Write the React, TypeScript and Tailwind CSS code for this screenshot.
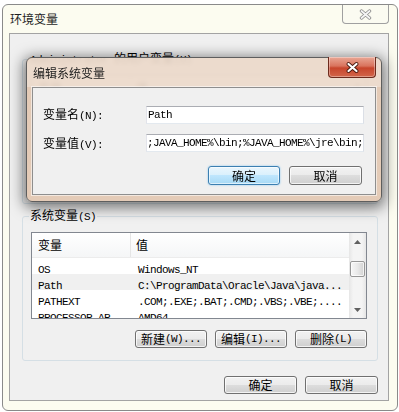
import React from "react";

// ASCII part of SimSun-like text: 6px per character
function M({ children }: { children: React.ReactNode }) {
  return (
    <span className="[font-family:'Liberation_Mono',monospace] text-[11px] tracking-[-0.6px]">
      {children}
    </span>
  );
}

const btnGray =
  "flex h-[18px] items-center justify-center rounded-[3px] border border-[#707070] bg-[linear-gradient(to_bottom,#f2f2f2_0%,#ebebeb_49%,#dddddd_50%,#cfcfcf_100%)] text-[12px] leading-none text-black shadow-[inset_0_0_0_1px_rgba(255,255,255,0.75)]";

const btnBlue =
  "flex h-[19px] items-center justify-center rounded-[3px] border border-[#3c7fb1] bg-[linear-gradient(to_bottom,#eaf6fd_0%,#d9f0fc_49%,#bee6fd_50%,#a7d9f5_100%)] text-[12px] leading-none text-black shadow-[inset_0_0_0_1px_rgba(255,255,255,0.6),0_0_2px_#7dc3f0]";

type Row = { name: string; value: string };

function Arrow({ up }: { up?: boolean }) {
  return (
    <div className="flex h-[17px] items-center justify-center">
      <svg width="7" height="4" viewBox="0 0 7 4">
        {up ? (
          <polygon points="3.5,0 7,4 0,4" fill="#606060" />
        ) : (
          <polygon points="0,0 7,0 3.5,4" fill="#606060" />
        )}
      </svg>
    </div>
  );
}

function ListView({ rows, selected }: { rows: Row[]; selected?: number }) {
  return (
    <div className="flex h-[87px] border border-[#828790] bg-white">
      <div className="flex-1 overflow-hidden">
        <div className="flex h-[25px] border-b border-[#ececec] bg-[linear-gradient(to_bottom,#ffffff,#f5f6f7)] text-[12px]">
          <div className="flex w-[99px] items-center border-r border-[#e5e5e5] pl-[6px]">变量</div>
          <div className="flex flex-1 items-center pl-[5px]">值</div>
        </div>
        {rows.map((r, i) => (
          <div
            key={r.name}
            className={`flex h-[16px] items-center whitespace-nowrap ${i === selected ? "bg-[#f0f0f0]" : ""}`}
          >
            <div className="w-[100px] pl-[6px]">
              <M>{r.name}</M>
            </div>
            <div className="pl-[6px]">
              <M>{r.value}</M>
            </div>
          </div>
        ))}
      </div>
      <div className="flex w-[17px] flex-col bg-[linear-gradient(to_right,#e6e6e6,#f4f4f4_25%,#f4f4f4_75%,#e6e6e6)]">
        <Arrow up />
        <div className="flex-1">
          <div className="mx-[1px] mt-[11px] h-[16px] rounded-[2px] border border-[#979797] bg-[linear-gradient(to_right,#f7f7f7,#e9e9e9_50%,#d2d2d2)] shadow-[inset_0_0_0_1px_rgba(255,255,255,0.7)]" />
        </div>
        <Arrow />
      </div>
    </div>
  );
}

function Group({
  title,
  rows,
  selected,
  buttons,
  className = "",
}: {
  title: React.ReactNode;
  rows: Row[];
  selected?: number;
  buttons: React.ReactNode[];
  className?: string;
}) {
  return (
    <fieldset className={`rounded-[3px] border border-[#d5dfe5] pb-[12px] pl-[8px] pr-[10px] ${className}`}>
      <legend className="ml-[-2px] px-[1px] text-[12px] leading-[14px]">{title}</legend>
      <div className="mt-[8px]">
        <ListView rows={rows} selected={selected} />
      </div>
      <div className="mt-[11px] flex justify-end gap-[8px]">
        {buttons.map((b, i) => (
          <div key={i} className={`${btnGray} w-[72px]`}>
            {b}
          </div>
        ))}
      </div>
    </fieldset>
  );
}

function CloseX({ outline, fill, sw }: { outline: string; fill: string; sw: number }) {
  return (
    <svg width="13" height="11" viewBox="0 0 13 11">
      <path d="M2.5 2 L10.5 9 M10.5 2 L2.5 9" stroke={outline} strokeWidth={sw + 1.6} strokeLinecap="round" />
      <path d="M2.5 2 L10.5 9 M10.5 2 L2.5 9" stroke={fill} strokeWidth={sw} strokeLinecap="round" />
    </svg>
  );
}

export default function App() {
  const userRows: Row[] = [
    { name: "PATH", value: "C:\\Program Files\\Java" },
    { name: "TEMP", value: "%USERPROFILE%\\AppData\\Local\\Temp" },
    { name: "TMP", value: "%USERPROFILE%\\AppData\\Local\\Temp" },
  ];
  const sysRows: Row[] = [
    { name: "OS", value: "Windows_NT" },
    { name: "Path", value: "C:\\ProgramData\\Oracle\\Java\\java..." },
    { name: "PATHEXT", value: ".COM;.EXE;.BAT;.CMD;.VBS;.VBE;...." },
    { name: "PROCESSOR_AR", value: "AMD64" },
  ];

  return (
    <div className="relative h-[412px] w-[399px] overflow-hidden bg-white pl-[2px] pt-[4px] text-black [font-family:'Noto_Sans_CJK_SC','Liberation_Sans',sans-serif]">
      {/* 环境变量 window */}
      <div className="flex h-[407px] w-[396px] flex-col rounded-[6px] border border-[#8a8a8a] bg-[#fcfcf0]">
        <div className="relative flex h-[28px] items-center pl-[7px] text-[12px] text-[#1e1e1e]">
          环境变量
          <div className="absolute right-[8px] top-0 flex h-[19px] w-[47px] items-center justify-center rounded-b-[4px] border border-t-0 border-[#a0a0a0] bg-[#fbfbf1]">
            <CloseX outline="#8c8c8c" fill="#f4f4f4" sw={1.8} />
          </div>
        </div>
        <div className="ml-[6px] mr-[8px] flex-1 border border-[#a3a3a3] bg-[#f0f0f0] pl-[12px] pr-[10px] pt-[17px]">
          <Group
            title={
              <>
                <M>Administrator </M>的用户变量<M>(U)</M>
              </>
            }
            rows={userRows}
            buttons={[
              <>新建<M>(N)...</M></>,
              <>编辑<M>(E)...</M></>,
              <>删除<M>(D)</M></>,
            ]}
          />
          <Group
            className="mt-[4px]"
            title={
              <>
                系统变量<M>(S)</M>
              </>
            }
            rows={sysRows}
            selected={1}
            buttons={[
              <>新建<M>(W)...</M></>,
              <>编辑<M>(I)...</M></>,
              <>删除<M>(L)</M></>,
            ]}
          />
          <div className="mt-[15px] flex justify-end gap-[8px]">
            <div className={`${btnGray} w-[73px]`}>确定</div>
            <div className={`${btnGray} w-[73px]`}>取消</div>
          </div>
        </div>
        <div className="h-[9px]" />
      </div>

      {/* 编辑系统变量 dialog, over the window */}
      <div className="absolute left-[26px] top-[57px] flex h-[145px] w-[356px] flex-col rounded-[6px] border border-[#5e5e5e] bg-[rgba(226,198,176,0.9)] shadow-[0_3px_14px_3px_rgba(0,0,0,0.5)] backdrop-blur-[2px]">
        <div className="relative flex h-[29px] items-center rounded-t-[6px] bg-[rgba(255,255,255,0.3)] pl-[6px] text-[12px] text-[#1e1e1e]">
          编辑系统变量
          <div className="absolute right-[5px] top-[-1px] flex h-[21px] w-[48px] items-center justify-center rounded-b-[4px] border border-t-0 border-[#6d2a1c] bg-[linear-gradient(to_bottom,#e9a795_0%,#d9735d_45%,#c7452c_55%,#d2664a_100%)] shadow-[inset_0_0_0_1px_rgba(255,255,255,0.35)]">
            <CloseX outline="#45160c" fill="#ffffff" sw={2.2} />
          </div>
        </div>
        <div className="mx-[5px] h-[108px] border border-[#8e8e8e] bg-[#f0f0f0] pl-[10px] pt-[17px] shadow-[0_0_0_1px_rgba(255,255,255,0.55)]">
          <div className="flex items-center">
            <div className="w-[103px] text-[12px]">
              变量名<M>(N):</M>
            </div>
            <div className="flex h-[18px] w-[218px] items-center border border-[#abadb3] border-b-[#e3e9ef] border-l-[#e2e3ea] border-r-[#dbdfe6] bg-white pl-[1px]">
              <M>Path</M>
            </div>
          </div>
          <div className="mt-[9px] flex items-center">
            <div className="w-[103px] text-[12px]">
              变量值<M>(V):</M>
            </div>
            <div className="flex h-[18px] w-[218px] items-center overflow-hidden whitespace-nowrap border border-[#abadb3] border-b-[#e3e9ef] border-l-[#e2e3ea] border-r-[#dbdfe6] bg-white">
              <M>;JAVA_HOME%\bin;%JAVA_HOME%\jre\bin;</M>
            </div>
          </div>
          <div className="mt-[13px] flex justify-end gap-[9px] pr-[13px]">
            <div className={`${btnBlue} w-[72px]`}>确定</div>
            <div className={`${btnGray} h-[19px] w-[73px]`}>取消</div>
          </div>
        </div>
        <div className="h-[6px]" />
      </div>
    </div>
  );
}
